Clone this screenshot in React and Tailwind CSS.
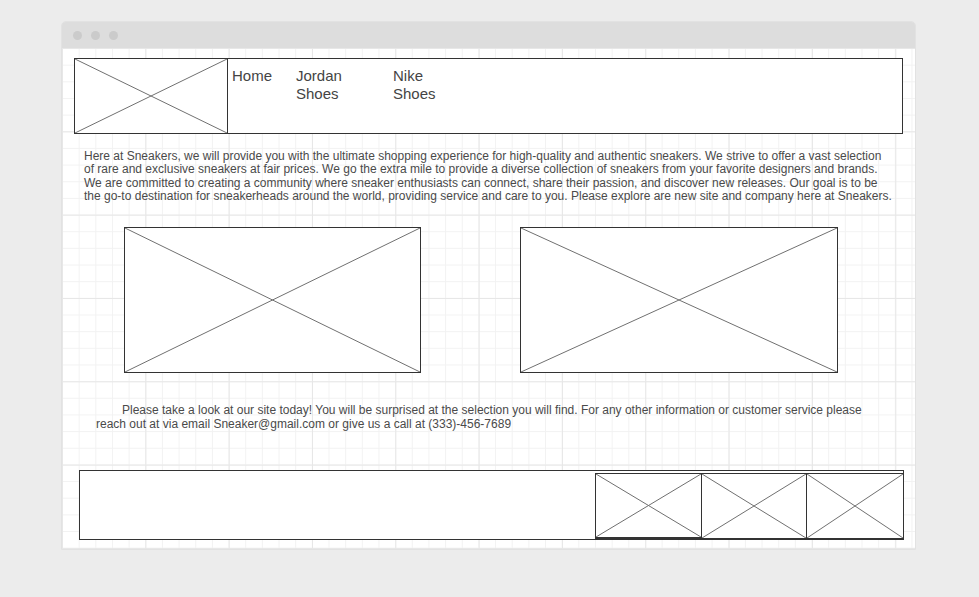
const font = { fontFamily: '"Liberation Sans", Arial, sans-serif' };

function Placeholder({ className = '' }) {
  return (
    <div className={`relative bg-white ${className}`}>
      <svg className="absolute inset-0 w-full h-full" preserveAspectRatio="none" viewBox="0 0 100 100">
        <line x1="0" y1="0" x2="100" y2="100" stroke="#707070" strokeWidth="1" vectorEffect="non-scaling-stroke" />
        <line x1="100" y1="0" x2="0" y2="100" stroke="#707070" strokeWidth="1" vectorEffect="non-scaling-stroke" />
      </svg>
    </div>
  );
}

export default function App() {
  return (
    <div className="w-[979px] h-[597px] bg-[#ececec] pt-[21px] pl-[61px]" style={font}>
      <div className="w-[855px] h-[529px] border border-[#e2e2e2] rounded-t-[5px] overflow-hidden flex flex-col">
        {/* title bar */}
        <div className="h-[26px] bg-[#dddddd] flex items-center gap-[9px] pl-[11px] shrink-0">
          <span className="w-[9px] h-[9px] rounded-full bg-[#cbcbcb]" />
          <span className="w-[9px] h-[9px] rounded-full bg-[#cbcbcb]" />
          <span className="w-[9px] h-[9px] rounded-full bg-[#cbcbcb]" />
        </div>

        {/* canvas */}
        <div className="flex-1 bg-white bg-[linear-gradient(to_right,#e7e7e7_1px,transparent_1px),linear-gradient(to_bottom,#e7e7e7_1px,transparent_1px),linear-gradient(to_right,#f2f2f2_1px,transparent_1px),linear-gradient(to_bottom,#f2f2f2_1px,transparent_1px)] bg-[size:83.33px_83.33px,83.33px_83.33px,16.67px_16.67px,16.67px_16.67px] flex flex-col">
          {/* header */}
          <div className="ml-[12px] mt-[10px] w-[829px] h-[76px] border border-[#333] flex bg-white">
            <Placeholder className="w-[153px] h-full border-r border-[#333]" />
            <nav className="flex pl-[4px] pt-[8px] text-[15px] leading-[18px] text-[#444]">
              <span className="w-[64px]">Home</span>
              <span className="w-[97px]">Jordan<br />Shoes</span>
              <span>Nike<br />Shoes</span>
            </nav>
          </div>

          {/* intro */}
          <p className="ml-[22px] mt-[16px] w-[809px] text-[12px] leading-[13.4px] text-[#4a4a4a]">
            Here at Sneakers, we will provide you with the ultimate shopping experience for high-quality and authentic sneakers. We strive to offer a vast selection of rare and exclusive sneakers at fair prices. We go the extra mile to provide a diverse collection of sneakers from your favorite designers and brands. We are committed to creating a community where sneaker enthusiasts can connect, share their passion, and discover new releases. Our goal is to be the go-to destination for sneakerheads around the world, providing service and care to you. Please explore are new site and company here at Sneakers.
          </p>

          {/* pictures */}
          <div className="flex mt-[23px] ml-[62px] gap-[99px]">
            <Placeholder className="w-[297px] h-[146px] border border-[#333]" />
            <Placeholder className="w-[318px] h-[146px] border border-[#333]" />
          </div>

          {/* contact */}
          <p className="ml-[34px] mt-[30px] w-[780px] indent-[26px] text-[12px] leading-[14px] text-[#4a4a4a]">
            Please take a look at our site today! You will be surprised at the selection you will find. For any other information or customer service please reach out at via email Sneaker@gmail.com or give us a call at (333)-456-7689
          </p>

          {/* footer */}
          <div className="ml-[17px] mt-[39px] w-[825px] h-[70px] border border-[#333] bg-white flex justify-end items-start pt-[2px]">
            <Placeholder className="w-[107px] h-[66px] border border-[#333] border-b-2" />
            <Placeholder className="w-[105px] h-[66px] border-y border-r border-[#333]" />
            <Placeholder className="w-[96px] h-[66px] border-y border-[#333]" />
          </div>
        </div>
      </div>
    </div>
  );
}
